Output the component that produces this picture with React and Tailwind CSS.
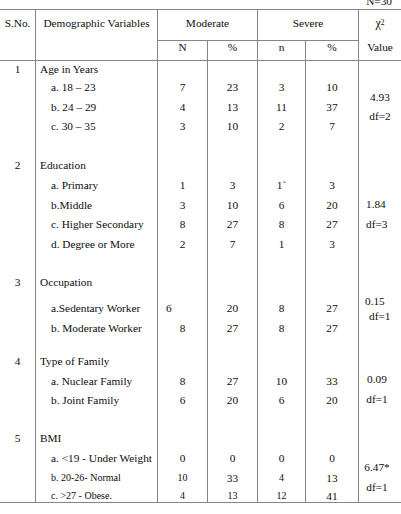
import React from 'react';

const LINE = 'border-[#858585]';
const COLS = ['w-[50px]', 'w-[50px]', 'w-[48px]', 'w-[53px]'];

const sections = [
  {
    chi: { box: 'pt-[26.5px] text-center leading-[19px]', lines: ['4.93', 'df=2'] },
    rows: [
      { h: 'h-[16px]', no: '1', label: 'Age in Years' },
      { h: 'h-[20px]', label: 'a. 18 – 23', sub: true, v: ['7', '23', '3', '10'] },
      { h: 'h-[19px]', label: 'b. 24 – 29', sub: true, v: ['4', '13', '11', '37'] },
      { h: 'h-[20px]', label: 'c. 30 – 35', sub: true, v: ['3', '10', '2', '7'] },
      { h: 'h-[19px]' },
    ],
  },
  {
    chi: { box: 'pt-[39px] pl-[7px] leading-[20px]', lines: ['1.84', 'df=3'] },
    rows: [
      { h: 'h-[20px]', no: '2', label: 'Education' },
      { h: 'h-[20px]', label: 'a. Primary', sub: true, v: ['1', '3', '1`', '3'] },
      { h: 'h-[19px]', label: 'b.Middle', sub: true, v: ['3', '10', '6', '20'] },
      { h: 'h-[20px]', label: 'c. Higher Secondary', sub: true, v: ['8', '27', '8', '27'] },
      { h: 'h-[19px]', label: 'd. Degree or More', sub: true, v: ['2', '7', '1', '3'] },
      { h: 'h-[19px]' },
    ],
  },
  {
    chi: { box: 'pt-[21.5px] leading-[15px]', lines: ['0.15', 'df=1'], indents: ['pl-[6px]', 'pl-[10px]'] },
    rows: [
      { h: 'h-[20px]', no: '3', label: 'Occupation' },
      { h: 'h-[6px]' },
      { h: 'h-[20px]', label: 'a.Sedentary Worker', sub: true, v: ['6', '20', '8', '27'], leftN: true },
      { h: 'h-[20px]', label: 'b. Moderate Worker', sub: true, v: ['8', '27', '8', '27'] },
      { h: 'h-[13px]' },
    ],
  },
  {
    chi: { box: 'pt-[18px] pr-[6px] text-center leading-[20px]', lines: ['0.09', 'df=1'] },
    rows: [
      { h: 'h-[20px]', no: '4', label: 'Type of Family' },
      { h: 'h-[19px]', label: 'a. Nuclear Family', sub: true, v: ['8', '27', '10', '33'] },
      { h: 'h-[19px]', label: 'b. Joint Family', sub: true, v: ['6', '20', '6', '20'] },
      { h: 'h-[19px]' },
    ],
  },
  {
    last: true,
    chi: { box: 'pt-[29px] pr-[6px] text-center leading-[20px]', lines: ['6.47*', 'df=1'] },
    rows: [
      { h: 'h-[20px]', no: '5', label: 'BMI' },
      { h: 'h-[20px]', label: 'a. <19 - Under Weight', sub: true, v: ['0', '0', '0', '0'] },
      { h: 'h-[19px]', label: 'b. 20-26- Normal', sub: true, v: ['10', '33', '4', '13'], small: [true, false, true, false] },
      { h: 'h-[15px]', label: 'c. >27 - Obese.', sub: true, v: ['4', '13', '12', '41'], small: [true, true, true, false], nudge: true },
    ],
  },
];

function Row({ r }) {
  const align = r.nudge ? 'items-start pt-[2px]' : 'items-center';
  const labelSize = r.small ? 'text-[10px]' : '';
  return (
    <div className={`flex ${r.h}`}>
      <div className={`w-[36px] border-r ${LINE} flex justify-center ${align} leading-[14px]`}>{r.no}</div>
      <div className={`w-[122px] border-r ${LINE} flex ${align} leading-[14px] whitespace-nowrap ${r.sub ? 'pl-[15px]' : 'pl-[4px]'} ${labelSize}`}>
        {r.label}
      </div>
      {COLS.map((w, i) => (
        <div
          key={i}
          className={`${w} border-r ${LINE} flex ${align} leading-[14px] ${
            r.leftN && i === 0 ? 'justify-start pl-[8px]' : 'justify-center'
          } ${r.small && r.small[i] ? 'text-[10px]' : ''}`}
        >
          {r.v ? r.v[i] : ''}
        </div>
      ))}
    </div>
  );
}

function Section({ s }) {
  return (
    <div className={`flex ${s.last ? `border-b ${LINE}` : ''}`}>
      <div className="flex flex-col">
        {s.rows.map((r, i) => (
          <Row key={i} r={r} />
        ))}
      </div>
      <div className={`flex-1 ${s.chi.box}`}>
        {s.chi.lines.map((t, i) => (
          <div key={i} className={s.chi.indents ? s.chi.indents[i] : ''}>
            {t}
          </div>
        ))}
      </div>
    </div>
  );
}

export default function App() {
  return (
    <div className="w-[401px] h-[514px] overflow-hidden bg-white text-[#0d0d0d] text-[11.3px] [font-family:Liberation_Serif,serif]">
      <div className="h-[9px] flex justify-end items-end pr-[9px] overflow-hidden">
        <span className="leading-[12px] mb-[2px]">N=30</span>
      </div>

      <div className={`flex h-[52px] border-t border-b ${LINE}`}>
        <div className={`w-[36px] border-r ${LINE} pt-[6px] leading-[14px] text-center`}>S.No.</div>
        <div className={`w-[122px] border-r ${LINE} pt-[6px] leading-[14px] text-center`}>Demographic Variables</div>
        <div className="flex flex-col w-[100px]">
          <div className={`h-[31px] border-r border-b ${LINE} pt-[6px] leading-[14px] text-center`}>Moderate</div>
          <div className="flex h-[19px]">
            <div className={`w-[50px] border-r ${LINE} leading-[12px] text-center`}>N</div>
            <div className={`w-[50px] border-r ${LINE} leading-[12px] text-center`}>%</div>
          </div>
        </div>
        <div className="flex flex-col w-[101px]">
          <div className={`h-[31px] border-r border-b ${LINE} pt-[6px] leading-[14px] text-center`}>Severe</div>
          <div className="flex h-[19px]">
            <div className={`w-[48px] border-r ${LINE} leading-[12px] text-center`}>n</div>
            <div className={`w-[53px] border-r ${LINE} leading-[12px] text-center`}>%</div>
          </div>
        </div>
        <div className="flex-1 flex flex-col items-center pt-[6px]">
          <div className="leading-[14px] text-[12px]">
            χ<sup className="text-[7.5px] relative -top-[2px]">2</sup>
          </div>
          <div className="leading-[12px] mt-[11px]">Value</div>
        </div>
      </div>

      {sections.map((s, i) => (
        <Section key={i} s={s} />
      ))}
    </div>
  );
}
